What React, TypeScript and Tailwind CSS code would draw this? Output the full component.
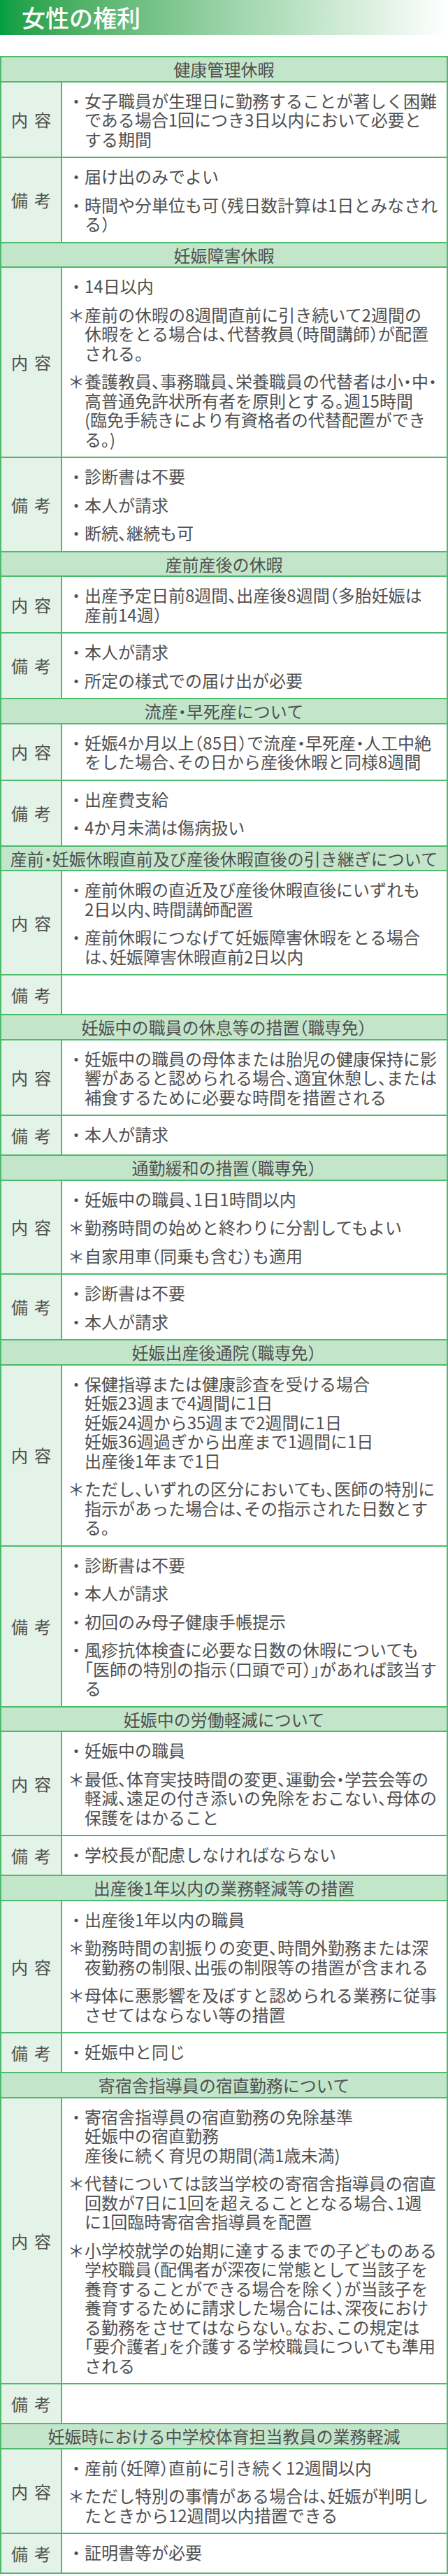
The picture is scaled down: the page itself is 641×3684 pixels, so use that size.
type Item = { mark: string; lines: string[] };
type Section = { title: string; body: Item[]; note: Item[] };

const b = (...lines: string[]): Item => ({ mark: "・", lines });
const s = (...lines: string[]): Item => ({ mark: "＊", lines });

const sections: Section[] = [
  {
    title: "健康管理休暇",
    body: [b("女子職員が生理日に勤務することが著しく困難", "である場合1回につき3日以内において必要と", "する期間")],
    note: [b("届け出のみでよい"), b("時間や分単位も可（残日数計算は1日とみなされ", "る）")],
  },
  {
    title: "妊娠障害休暇",
    body: [
      b("14日以内"),
      s("産前の休暇の8週間直前に引き続いて2週間の", "休暇をとる場合は、代替教員（時間講師）が配置", "される。"),
      s("養護教員、事務職員、栄養職員の代替者は小・中・", "高普通免許状所有者を原則とする。週15時間", "(臨免手続きにより有資格者の代替配置ができ", "る。)"),
    ],
    note: [b("診断書は不要"), b("本人が請求"), b("断続、継続も可")],
  },
  {
    title: "産前産後の休暇",
    body: [b("出産予定日前8週間、出産後8週間（多胎妊娠は", "産前14週）")],
    note: [b("本人が請求"), b("所定の様式での届け出が必要")],
  },
  {
    title: "流産・早死産について",
    body: [b("妊娠4か月以上（85日）で流産・早死産・人工中絶", "をした場合、その日から産後休暇と同様8週間")],
    note: [b("出産費支給"), b("4か月未満は傷病扱い")],
  },
  {
    title: "産前・妊娠休暇直前及び産後休暇直後の引き継ぎについて",
    body: [
      b("産前休暇の直近及び産後休暇直後にいずれも", "2日以内、時間講師配置"),
      b("産前休暇につなげて妊娠障害休暇をとる場合", "は、妊娠障害休暇直前2日以内"),
    ],
    note: [],
  },
  {
    title: "妊娠中の職員の休息等の措置（職専免）",
    body: [b("妊娠中の職員の母体または胎児の健康保持に影", "響があると認められる場合、適宜休憩し、または", "補食するために必要な時間を措置される")],
    note: [b("本人が請求")],
  },
  {
    title: "通勤緩和の措置（職専免）",
    body: [b("妊娠中の職員、1日1時間以内"), s("勤務時間の始めと終わりに分割してもよい"), s("自家用車（同乗も含む）も適用")],
    note: [b("診断書は不要"), b("本人が請求")],
  },
  {
    title: "妊娠出産後通院（職専免）",
    body: [
      b("保健指導または健康診査を受ける場合", "妊娠23週まで4週間に1日", "妊娠24週から35週まで2週間に1日", "妊娠36週過ぎから出産まで1週間に1日", "出産後1年まで1日"),
      s("ただし、いずれの区分においても、医師の特別に", "指示があった場合は、その指示された日数とす", "る。"),
    ],
    note: [
      b("診断書は不要"),
      b("本人が請求"),
      b("初回のみ母子健康手帳提示"),
      b("風疹抗体検査に必要な日数の休暇についても", "「医師の特別の指示（口頭で可）」があれば該当す", "る"),
    ],
  },
  {
    title: "妊娠中の労働軽減について",
    body: [b("妊娠中の職員"), s("最低、体育実技時間の変更、運動会・学芸会等の", "軽減、遠足の付き添いの免除をおこない、母体の", "保護をはかること")],
    note: [b("学校長が配慮しなければならない")],
  },
  {
    title: "出産後1年以内の業務軽減等の措置",
    body: [
      b("出産後1年以内の職員"),
      s("勤務時間の割振りの変更、時間外勤務または深", "夜勤務の制限、出張の制限等の措置が含まれる"),
      s("母体に悪影響を及ぼすと認められる業務に従事", "させてはならない等の措置"),
    ],
    note: [b("妊娠中と同じ")],
  },
  {
    title: "寄宿舎指導員の宿直勤務について",
    body: [
      b("寄宿舎指導員の宿直勤務の免除基準", "妊娠中の宿直勤務", "産後に続く育児の期間(満1歳未満)"),
      s("代替については該当学校の寄宿舎指導員の宿直", "回数が7日に1回を超えることとなる場合、1週", "に1回臨時寄宿舎指導員を配置"),
      s(
        "小学校就学の始期に達するまでの子どものある",
        "学校職員（配偶者が深夜に常態として当該子を",
        "養育することができる場合を除く）が当該子を",
        "養育するために請求した場合には、深夜におけ",
        "る勤務をさせてはならない。なお、この規定は",
        "「要介護者」を介護する学校職員についても準用",
        "される"
      ),
    ],
    note: [],
  },
  {
    title: "妊娠時における中学校体育担当教員の業務軽減",
    body: [b("産前（妊障）直前に引き続く12週間以内"), s("ただし特別の事情がある場合は、妊娠が判明し", "たときから12週間以内措置できる")],
    note: [b("証明書等が必要")],
  },
];

const Row = ({ label, items }: { label: string[]; items: Item[] }) => (
  <div className="flex border-t-2 border-[#4cba6c]">
    <div className="w-[87px] shrink-0 min-h-[55px] flex items-center justify-center gap-[9px] bg-[#e4f3e7] border-r-2 border-[#4cba6c]">
      {label.map((c) => (
        <span key={c}>{c}</span>
      ))}
    </div>
    <div className="flex-1 pl-2 py-3 flex flex-col gap-[13px]">
      {items.map((it, i) => (
        <div key={i} className="flex">
          <span className="w-6 shrink-0 text-center">{it.mark}</span>
          <div className="whitespace-nowrap">
            {it.lines.map((l, j) => (
              <div key={j}>{l}</div>
            ))}
          </div>
        </div>
      ))}
    </div>
  </div>
);

export default function App() {
  return (
    <div className="w-[641px] bg-white font-['Noto_Sans_CJK_JP','Noto_Sans',sans-serif] text-[#505050] [font-feature-settings:'halt']">
      <div className="h-[50px] bg-linear-to-r from-[#009e41] via-[#a3d8b1] via-55% to-white pl-[31px]">
        <h1 className="text-[34px] leading-[50px] font-medium text-white">女性の権利</h1>
      </div>

      <div className="mt-[30px] border-2 border-t-0 border-[#4cba6c] text-[24px] leading-[27.5px]">
        {sections.map((sec) => (
          <div key={sec.title}>
            <div className="border-t-2 border-[#4cba6c] bg-[#c3e6cb] py-[3px] text-center whitespace-nowrap">
              {sec.title}
            </div>
            <Row label={["内", "容"]} items={sec.body} />
            <Row label={["備", "考"]} items={sec.note} />
          </div>
        ))}
      </div>
    </div>
  );
}
